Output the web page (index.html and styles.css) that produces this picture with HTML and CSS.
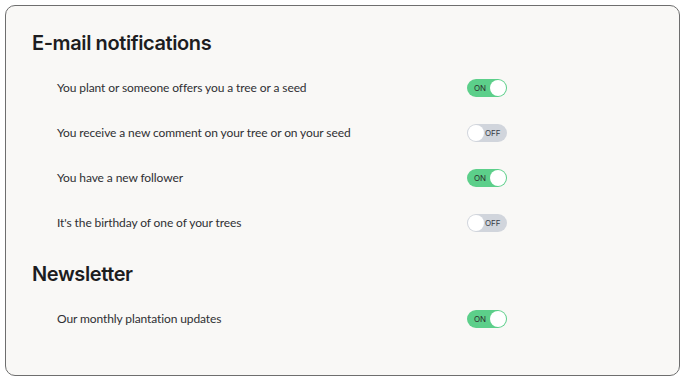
FILE: index.html
```html
<!DOCTYPE html>
<html>
<head>
<meta charset="utf-8">
<link rel="stylesheet" href="styles.css">
</head>
<body>
<div class="card">
  <h2 class="section-title">E-mail notifications</h2>
  <div class="row"><span class="label">You plant or someone offers you a tree or a seed</span><span class="toggle on"><span class="txt">ON</span><span class="knob"></span></span></div>
  <div class="row"><span class="label">You receive a new comment on your tree or on your seed</span><span class="toggle off"><span class="knob"></span><span class="txt">OFF</span></span></div>
  <div class="row"><span class="label">You have a new follower</span><span class="toggle on"><span class="txt">ON</span><span class="knob"></span></span></div>
  <div class="row"><span class="label">It's the birthday of one of your trees</span><span class="toggle off"><span class="knob"></span><span class="txt">OFF</span></span></div>
  <h2 class="section-title second">Newsletter</h2>
  <div class="row"><span class="label">Our monthly plantation updates</span><span class="toggle on"><span class="txt">ON</span><span class="knob"></span></span></div>
</div>
</body>
</html>
```
FILE: styles.css
```css
html, body { margin: 0; padding: 0; background: #ffffff; }
body { font-family: "Lato", sans-serif; }
.card {
  margin: 5px 0 0 5px;
  border: 1px solid #6e6e6e;
  border-radius: 10px;
  background: #f9f8f6;
  padding: 23px 0 0 26px;
  box-sizing: border-box;
  width: 675px;
  height: 371px;
}
.section-title {
  margin: 0;
  font-family: "Inter", sans-serif;
  font-weight: 600;
  font-size: 20px;
  line-height: 28px;
  color: #1d1d1f;
  letter-spacing: -0.4px;
}
.section-title.second { margin-top: 15px; }
.row {
  display: flex;
  align-items: center;
  height: 45px;
  padding-left: 25px;
}
.section-title + .row { margin-top: 8px; }
.label {
  width: 410px;
  font-size: 12px;
  letter-spacing: -0.1px;
  color: #2f2f33;
}
.toggle {
  display: flex;
  align-items: center;
  width: 40px;
  height: 18px;
  border-radius: 9px;
  box-sizing: border-box;
  padding: 1px;
  font-family: "Inter", sans-serif;
  font-size: 8px;
  color: #2b2b2b;
}
.toggle.on { background: #5ccf8a; justify-content: space-between; padding-left: 7px; }
.toggle.off { background: #d1d5dc; gap: 1px; color: #363b47; }
.knob {
  width: 16px;
  height: 16px;
  border-radius: 50%;
  background: #fff;
}
```
